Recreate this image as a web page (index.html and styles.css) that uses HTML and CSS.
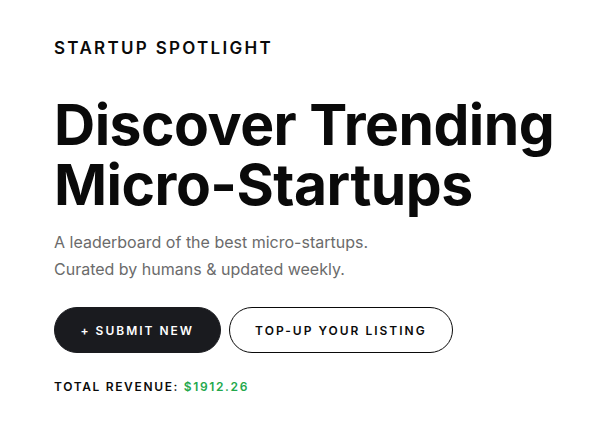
FILE: index.html
```html
<!DOCTYPE html>
<html>
<head>
<meta charset="utf-8">
<link rel="stylesheet" href="styles.css">
</head>
<body>
<section class="hero">
  <p class="eyebrow">STARTUP SPOTLIGHT</p>
  <h1 class="title">Discover Trending<br>Micro-Startups</h1>
  <p class="lead">A leaderboard of the best micro-startups.<br>Curated by humans &amp; updated weekly.</p>
  <div class="actions">
    <button class="btn btn-dark">+ SUBMIT NEW</button>
    <button class="btn btn-outline">TOP-UP YOUR LISTING</button>
  </div>
  <p class="revenue">TOTAL REVENUE: <span class="amount">$1912.26</span></p>
</section>
</body>
</html>
```
FILE: styles.css
```css
html, body {
  margin: 0;
  padding: 0;
  background: #ffffff;
}
body {
  font-family: Inter, "Noto Sans", sans-serif;
  color: #0a0a0a;
}
.hero {
  padding: 37px 54px 0;
  display: flex;
  flex-direction: column;
  align-items: flex-start;
}
.eyebrow {
  margin: 0;
  font-size: 17px;
  font-weight: 600;
  letter-spacing: 2.3px;
  line-height: 22px;
}
.title {
  margin: 36px 0 0;
  font-size: 57px;
  font-weight: 700;
  line-height: 60px;
  letter-spacing: -0.5px;
  white-space: nowrap;
}
.lead {
  margin: 14px 0 0;
  font-size: 16px;
  line-height: 27px;
  color: #6b6b6b;
}
.actions {
  margin-top: 24px;
  display: flex;
  gap: 8px;
}
.btn {
  font-family: Inter, sans-serif;
  font-size: 12px;
  font-weight: 600;
  letter-spacing: 2px;
  height: 46px;
  border-radius: 999px;
  padding: 0 25.5px;
  cursor: pointer;
}
.btn-dark {
  background: #1a1b1f;
  color: #ffffff;
  border: 1px solid #1a1b1f;
}
.btn-outline {
  background: #ffffff;
  color: #0a0a0a;
  border: 1px solid #0a0a0a;
}
.revenue {
  margin: 26px 0 0;
  font-size: 12px;
  font-weight: 600;
  letter-spacing: 1.65px;
}
.amount {
  color: #22a84b;
}
```
